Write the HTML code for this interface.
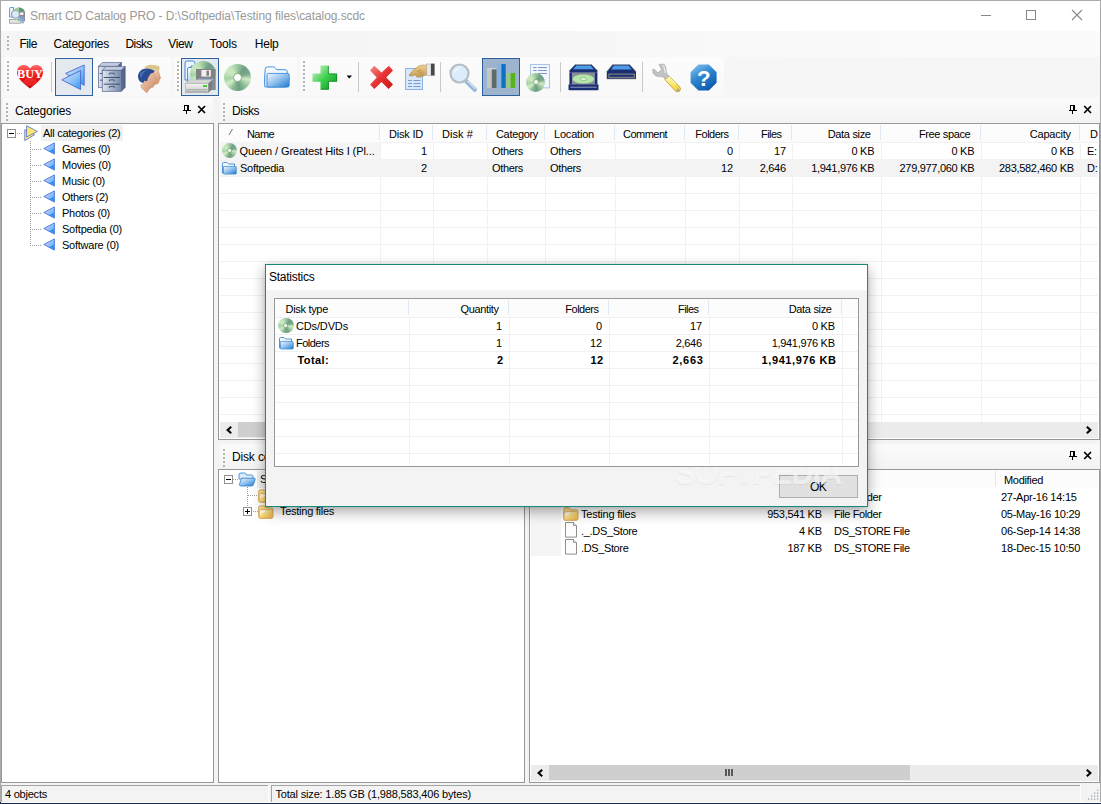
<!DOCTYPE html>
<html><head><meta charset="utf-8"><title>Smart CD Catalog PRO</title>
<style>
*{box-sizing:border-box;margin:0;padding:0}
html,body{width:1101px;height:804px;overflow:hidden;background:#f0f0f0}
body{position:relative;font-family:"Liberation Sans",sans-serif;font-size:12px;color:#000}
.a{position:absolute}
.t{position:absolute;white-space:nowrap}
.box{background:#fff;border:1px solid #979797}
.grip{background-image:repeating-linear-gradient(to bottom,#b4b4b4 0,#b4b4b4 2px,transparent 2px,transparent 4px)}
.sep{width:1px;background:#c8c8c8}
.btnsel{border:1px solid #2c62a0;background:#e4e9ef}
</style></head><body>
<svg width="0" height="0" style="position:absolute"><defs>

<linearGradient id="gHeart" x1="0" y1="0" x2="0" y2="1"><stop offset="0" stop-color="#ff6a6a"/><stop offset=".45" stop-color="#f01818"/><stop offset="1" stop-color="#c80000"/></linearGradient>
<linearGradient id="gTri" x1="0" y1="0" x2="1" y2="1"><stop offset="0" stop-color="#d6e8ff"/><stop offset=".55" stop-color="#8fc0f8"/><stop offset="1" stop-color="#2f98f4"/></linearGradient>
<linearGradient id="gCab" x1="0" y1="0" x2="1" y2="0"><stop offset="0" stop-color="#e4e9f2"/><stop offset=".5" stop-color="#a9b5cc"/><stop offset="1" stop-color="#7686a8"/></linearGradient>
<linearGradient id="gFold" x1="0" y1="0" x2="1" y2="1"><stop offset="0" stop-color="#f4f9ff"/><stop offset=".5" stop-color="#8fc0ee"/><stop offset="1" stop-color="#2078cc"/></linearGradient>
<linearGradient id="gFoldB" x1="0" y1="0" x2="0" y2="1"><stop offset="0" stop-color="#ffffff"/><stop offset="1" stop-color="#b8d6f4"/></linearGradient>
<linearGradient id="gFoldY" x1="0" y1="0" x2="1" y2="1"><stop offset="0" stop-color="#fff6c4"/><stop offset=".5" stop-color="#f9dc7c"/><stop offset="1" stop-color="#e6a53e"/></linearGradient>
<linearGradient id="gPlus" x1="0" y1="0" x2="1" y2="1"><stop offset="0" stop-color="#d8f8d4"/><stop offset=".5" stop-color="#3fcf4f"/><stop offset="1" stop-color="#089a1c"/></linearGradient>
<linearGradient id="gX" x1="0" y1="0" x2="1" y2="1"><stop offset="0" stop-color="#f58a8a"/><stop offset=".5" stop-color="#e63232"/><stop offset="1" stop-color="#c81414"/></linearGradient>
<linearGradient id="gHelp" x1="0" y1="0" x2=".6" y2="1"><stop offset="0" stop-color="#8cc6f2"/><stop offset=".5" stop-color="#2f88d2"/><stop offset="1" stop-color="#0e5cae"/></linearGradient>
<linearGradient id="gDrv" x1="0" y1="0" x2="0" y2="1"><stop offset="0" stop-color="#f4f4f4"/><stop offset="1" stop-color="#c4c6c4"/></linearGradient>
<linearGradient id="gSkin" x1="0" y1="0" x2="1" y2="1"><stop offset="0" stop-color="#f6dcc8"/><stop offset="1" stop-color="#c88058"/></linearGradient>
<linearGradient id="gHand" x1="0" y1="0" x2="0" y2="1"><stop offset="0" stop-color="#f0d08c"/><stop offset="1" stop-color="#c89a50"/></linearGradient>
<linearGradient id="gYel" x1="0" y1="0" x2="1" y2="1"><stop offset="0" stop-color="#fff59a"/><stop offset="1" stop-color="#f4d84a"/></linearGradient>

</defs></svg>
<div class="a " style="left:0px;top:0px;width:1101px;height:804px;background:#f3f3f3;"></div>
<div class="a " style="left:1px;top:1px;width:1099px;height:30px;background:#fff;"></div>
<div class="a " style="left:1px;top:31px;width:1099px;height:67px;background:linear-gradient(to right,#f5f5f5 0,#f6f6f6 50%,#f9f9f9 67%,#fbfbfb 100%);"></div>
<div class="a " style="left:1px;top:57px;width:1099px;height:41px;background:#f6f6f6;"></div>
<svg class="a" style="left:9px;top:6.6px" width="17" height="17" viewBox="0 0 17 17"><path d="M.6 1.2q0-.7.7-.7h3.2v9.5h-3.9z" fill="#eaf3fc" stroke="#4a90dc" stroke-width=".9"/><path d="M3.6 6.4A6.2 6.2 0 0 1 16 6.4z" fill="#9ccf9a"/><path d="M10 .4A6.2 6.2 0 0 1 16 6.4H10z" fill="#5f9a78"/><rect x="10" y="4.6" width="6" height="9.8" fill="#8a8a8a"/><rect x="11.2" y="5.4" width="3.2" height="2.6" fill="#f4f4f4"/><rect x="11" y="9.4" width="4.4" height="4.6" fill="#8a9ccc"/><rect x=".6" y="12.4" width="11.4" height="3.8" fill="#e4e6e4" stroke="#8e908e" stroke-width=".7"/><rect x="9" y="13.2" width="1.6" height="1" fill="#38c820"/><path d="M9 10L14 15.4" stroke="#8ab4dc" stroke-width="2.2" stroke-linecap="round"/><circle cx="6.4" cy="7.2" r="3.9" fill="#d8ecfa" stroke="#a4acb4" stroke-width="1.3"/></svg>
<div class="t" style="top:8.34px;font-size:12px;line-height:16px;letter-spacing:-0.072px;color:#999;left:30px;">Smart CD Catalog PRO - D:\Softpedia\Testing files\catalog.scdc</div>
<svg class="a" style="left:970px;top:5px" width="120" height="22" viewBox="0 0 120 22"><path d="M11 10.5H21" stroke="#888" stroke-width="1" fill="none"/><rect x="56.5" y="5.5" width="9" height="9" fill="none" stroke="#888"/><path d="M102 5L112 15M112 5L102 15" stroke="#888" stroke-width="1.1" fill="none"/></svg>
<div class="a grip" style="left:7px;top:36px;width:2px;height:16px;"></div>
<div class="t" style="top:35.84px;font-size:12px;line-height:16px;letter-spacing:-0.459px;color:#000;left:19.4px;">File</div>
<div class="t" style="top:35.84px;font-size:12px;line-height:16px;letter-spacing:-0.253px;color:#000;left:53.5px;">Categories</div>
<div class="t" style="top:35.84px;font-size:12px;line-height:16px;letter-spacing:-0.546px;color:#000;left:125.4px;">Disks</div>
<div class="t" style="top:35.84px;font-size:12px;line-height:16px;letter-spacing:-0.348px;color:#000;left:168.2px;">View</div>
<div class="t" style="top:35.84px;font-size:12px;line-height:16px;letter-spacing:-0.143px;color:#000;left:209.6px;">Tools</div>
<div class="t" style="top:35.84px;font-size:12px;line-height:16px;letter-spacing:-0.195px;color:#000;left:254.7px;">Help</div>
<div class="a " style="left:4px;top:57px;width:167px;height:40px;background:linear-gradient(#fcfcfc,#f8f8f8);border-radius:4px 4px 0 0;"></div>
<div class="a grip" style="left:7px;top:61px;width:2px;height:32px;"></div>
<div class="a " style="left:174px;top:57px;width:123px;height:40px;background:linear-gradient(#fcfcfc,#f8f8f8);border-radius:4px 4px 0 0;"></div>
<div class="a grip" style="left:177px;top:61px;width:2px;height:32px;"></div>
<div class="a " style="left:300px;top:57px;width:424px;height:40px;background:linear-gradient(#fcfcfc,#f8f8f8);border-radius:4px 4px 0 0;"></div>
<div class="a grip" style="left:303px;top:61px;width:2px;height:32px;"></div>
<div class="a sep" style="left:51px;top:62px;width:1px;height:30px;"></div>
<div class="a sep" style="left:358px;top:62px;width:1px;height:30px;"></div>
<div class="a sep" style="left:440px;top:62px;width:1px;height:30px;"></div>
<div class="a sep" style="left:560px;top:62px;width:1px;height:30px;"></div>
<div class="a sep" style="left:642px;top:62px;width:1px;height:30px;"></div>
<div class="a btnsel" style="left:55px;top:58px;width:38px;height:38px;"></div>
<div class="a btnsel" style="left:181px;top:58px;width:38px;height:38px;"></div>
<div class="a " style="left:482px;top:58px;width:38px;height:38px;border:1px solid #2b5f9e;background:#9db3ce;"></div>
<svg class="a" style="left:16px;top:64px" width="28" height="26" viewBox="0 0 28 26"><path d="M14 24.5C5 17.5 1 13.5 1 8C1 3.5 4.3 1 7.8 1C10.6 1 12.8 2.5 14 4.6C15.2 2.5 17.4 1 20.2 1C23.7 1 27 3.5 27 8C27 13.5 23 17.5 14 24.5z" fill="url(#gHeart)"/><ellipse cx="14" cy="18" rx="7" ry="4" fill="#ff5a5a" opacity=".35"/><text x="14" y="14.4" text-anchor="middle" font-family="Liberation Serif,serif" font-weight="bold" font-size="11.5" fill="#fff" textLength="26" lengthAdjust="spacingAndGlyphs">BUY</text></svg>
<svg class="a" style="left:61px;top:64px" width="26" height="27" viewBox="0 0 26 27"><path d="M4.6 9.4L23.2 1v20.4z" fill="url(#gTri)" stroke="#4a6cc8" stroke-width=".9" stroke-linejoin="round"/><path d="M.8 15.8L19.6 6.4V25.6z" fill="url(#gTri)" stroke="#4a6cc8" stroke-width=".9" stroke-linejoin="round"/></svg>
<svg class="a" style="left:97.6px;top:61.6px" width="28.6" height="30.6" viewBox="0 0 30 32"><g transform="translate(0.5,0.5)"><path d="M0 4L4 0H24L20 4z" fill="#c4cde0" stroke="#5a6a90" stroke-width=".7"/><path d="M20 4L24 0V22L20 26z" fill="#55658e" stroke="#4a5a82" stroke-width=".7"/><rect x="0" y="4" width="20" height="22" fill="url(#gCab)" stroke="#5a6a90" stroke-width=".8"/><path d="M1.5 11.5H18.5M1.5 18.5H18.5" stroke="#3a4a78" stroke-width="1"/><path d="M7.5 8.5V7h5v1.5M7.5 15.5V14h5v1.5M7.5 22.5V21h5v1.5" fill="none" stroke="#3a4a78" stroke-width=".9"/></g><g transform="translate(4.5,4.7)"><path d="M0 4L4 0H24L20 4z" fill="#c4cde0" stroke="#5a6a90" stroke-width=".7"/><path d="M20 4L24 0V22L20 26z" fill="#55658e" stroke="#4a5a82" stroke-width=".7"/><rect x="0" y="4" width="20" height="22" fill="url(#gCab)" stroke="#5a6a90" stroke-width=".8"/><path d="M1.5 11.5H18.5M1.5 18.5H18.5" stroke="#3a4a78" stroke-width="1"/><path d="M7.5 8.5V7h5v1.5M7.5 15.5V14h5v1.5M7.5 22.5V21h5v1.5" fill="none" stroke="#3a4a78" stroke-width=".9"/></g></svg>
<svg class="a" style="left:137px;top:64px" width="26" height="30" viewBox="0 0 26 30"><path d="M7.2 3.9Q8.4 2 10.1 1.4Q13.4 .6 16.8 .9Q20 1.2 21.8 2.2Q22.9 3.2 22.7 4.3L21.8 7.4L17.2 5.7L13.5 4.9z" fill="#d9c688"/><path d="M16.6 5.4L21.8 7Q22.6 8.6 22.7 10.5Q23.6 12.6 24 13.9Q23.6 14.8 22.7 15.6Q23 16.6 22.3 17.2Q22.2 18.8 21 19.7Q19.8 20.6 18.5 20.6L16 16z" fill="url(#gSkin)"/><path d="M13.5 9.7L17.2 8.9Q18 10.6 18.5 12.2Q19.4 15 19.5 16.8Q19 17.8 18.3 18.3Q18.9 19.6 18.1 20.2Q18 21.4 16.8 21.8Q16.6 23.2 15.4 23.6Q14 24 13 24.6L9.7 28.9L5.1 24.7Q3.8 23 3.5 21.4L6.4 18.9L7.6 16.8L10.1 17.2L11 13.9z" fill="url(#gSkin)" stroke="#c08860" stroke-width=".3"/><path d="M.95 13.05Q.9 10.6 1.8 8.9Q3 6.6 5.1 5.5Q8.4 4.2 11.8 4.7Q15.4 5.2 17.7 6.8L16.8 8.5L13.5 9.7L11 13.9L10.1 17.2L7.6 16.8L6.4 18.9L3.5 18.1Q1.4 16.4 .95 13.05z" fill="#2a4a92"/><path d="M3 9.4Q5.6 6.2 10.6 6Q7.6 7.4 6 10Q4.8 12 4.4 14.4Q2.6 12 3 9.4z" fill="#5078bc" opacity=".75"/><path d="M6.4 18.9Q7.6 20.4 8.4 19.6Q9 18.4 7.6 16.8z" fill="#e2ae8c"/></svg>
<svg class="a" style="left:184px;top:60px" width="34" height="34" viewBox="0 0 34 34"><path d="M1 3q0-2 2-2h6.5l1.5 2v3h-4v14h-6z" fill="#eef5fd" stroke="#3a8ad8" stroke-width="1"/><path d="M3.5 9q0-1.5 1.5-1.5h5v14h-6.5z" fill="url(#gFoldB)" stroke="#3a8ad8" stroke-width=".9"/></svg>
<div class="a" style="left:189.5px;top:60.5px;width:26px;height:26px;border-radius:50%;background:conic-gradient(from 0deg,#9cc8a0 0deg,#6f9f86 35deg,#7aa88c 70deg,#cfeac4 100deg,#8fbf96 140deg,#6d9c84 170deg,#86b690 200deg,#d2edc8 235deg,#a6d2a4 265deg,#cdeac2 300deg,#c2e4ba 330deg,#9cc8a0 360deg);"></div>
<div class="a" style="left:199.5px;top:70.5px;width:6px;height:6px;border-radius:50%;background:#fff;border:0.6px solid #86ad7c;"></div>
<svg class="a" style="left:184px;top:60px" width="34" height="34" viewBox="0 0 34 34"><rect x="12" y="9" width="19.6" height="21" fill="#828282"/><rect x="17.4" y="10" width="9.4" height="6.6" fill="#f2f2f2"/><rect x="22.4" y="10.6" width="2.6" height="5.2" fill="#828282"/><rect x="14" y="18.4" width="15.6" height="11" fill="#8a9ccc"/><path d="M1.4 23.4L6 19.8H28.6L24.2 23.4z" fill="#d4d6d4" stroke="#b0b2b0" stroke-width=".4"/><path d="M24.2 23.4L28.6 19.8V29L24.2 32.8z" fill="#7a7c7a"/><rect x="1.4" y="23.4" width="22.8" height="9.4" fill="url(#gDrv)" stroke="#9a9c9a" stroke-width=".5"/><path d="M2.4 29.6H23.2M2.4 31.4H23.2" stroke="#9a9c9a" stroke-width=".7"/><rect x="19" y="25.2" width="4" height="1.8" fill="#38c820"/></svg>
<div class="a" style="left:224.0px;top:64.0px;width:26.8px;height:26.8px;border-radius:50%;background:conic-gradient(from 0deg,#9cc8a0 0deg,#6f9f86 35deg,#7aa88c 70deg,#cfeac4 100deg,#8fbf96 140deg,#6d9c84 170deg,#86b690 200deg,#d2edc8 235deg,#a6d2a4 265deg,#cdeac2 300deg,#c2e4ba 330deg,#9cc8a0 360deg);"></div>
<div class="a" style="left:233.20000000000002px;top:73.2px;width:8.4px;height:8.4px;border-radius:50%;background:#fff;border:0.8px solid #86ad7c;"></div>
<svg class="a" style="left:263.6px;top:65.8px" width="26.6" height="22.4" viewBox="0 0 28 24"><path d="M1 3.5Q1 1 3.5 1h6.2q1.3 0 2.1 1l1.6 2h9.2q2 0 2 2v14.6q0 2-2 2h-20.6q-2 0-2-2z" fill="url(#gFoldB)" stroke="#3a8ad8" stroke-width="1"/><path d="M3 9.6q0-1.6 1.6-1.6h20.6q1.6 0 1.6 1.6v11.2q0 1.8-1.8 1.8h-20.2q-1.8 0-1.8-1.8z" fill="url(#gFold)" stroke="#3a8ad8" stroke-width=".9"/></svg>
<svg class="a" style="left:312px;top:65px" width="26" height="25" viewBox="0 0 26 25"><path d="M8.5 .5h8.4v8h8.2v8.2h-8.2v8h-8.4v-8h-8v-8.2h8z" fill="url(#gPlus)"/><path d="M16.4 1v8h8.2M16.4 16.4v7.8h-7.6M24.6 9.4v6.8h-7.8" fill="none" stroke="#067a14" stroke-width="1" opacity=".55"/></svg>
<svg class="a" style="left:346px;top:75px" width="7" height="4" viewBox="0 0 7 4"><path d="M.6 .6H6L3.3 3.6z" fill="#000"/></svg>
<svg class="a" style="left:369px;top:65px" width="25" height="25" viewBox="0 0 25 25"><path d="M5.2 .8L12.5 7.6L19.8 .8L24 5.4L17.2 12.4L24 19.4L19.6 24L12.5 17L5.4 24L1 19.4L7.8 12.4L1 5.4z" fill="url(#gX)"/></svg>
<svg class="a" style="left:404px;top:62px" width="32" height="30" viewBox="0 0 32 30"><rect x="1.5" y="6.5" width="17" height="21" fill="#d6e8fa" stroke="#8ab4e8" stroke-width="1"/><path d="M4 18.5h4M9.5 18.5h7M4 21.5h4M9.5 21.5h7M4 24.5h4M9.5 24.5h7" stroke="#7a9ad8" stroke-width="1.1"/><path d="M5.5 12.5C8 9 12 5.5 15 4C18 2.5 21 3 23 3.4V12.4C20 13.6 17 15.4 14 15.2C12 15 11.4 13.6 12 12.6C9.6 13.6 7 14.4 5.8 14C5 13.6 5 13 5.5 12.5z" fill="url(#gHand)" stroke="#a07a3a" stroke-width=".5"/><path d="M13 10L17 7.6M14.4 11.8L18.4 9.4M16 13.4L19.6 11" stroke="#a07a3a" stroke-width=".6"/><rect x="22.6" y="2" width="4.4" height="11.4" fill="#e8e8e8" stroke="#a0a0a0" stroke-width=".5"/><rect x="27" y="1.6" width="3.6" height="12" fill="#484848"/></svg>
<svg class="a" style="left:448px;top:62px" width="32" height="32" viewBox="0 0 32 32"><path d="M18.5 19.5L26.8 27.6" stroke="#9ab8d6" stroke-width="4.4" stroke-linecap="round"/><path d="M19.5 19L27.4 26.8" stroke="#d6e6f4" stroke-width="1.2"/><circle cx="11.5" cy="11.5" r="9" fill="#dcecfa" stroke="#b4bcc4" stroke-width="2.2"/><path d="M6 11C6.5 7 10 5 13 5.6C10.6 7 8 8.6 6 11z" fill="#fff" opacity=".8"/></svg>
<svg class="a" style="left:486.8px;top:64px" width="30" height="25" viewBox="0 0 30 25"><rect x="0" y="4.6" width="4.8" height="19.4" fill="#c2c8c8"/><rect x="4.8" y="5.4" width="4.7" height="18.6" fill="#5f6b6b"/><rect x="0" y="4.2" width="9.5" height="1" fill="#d4d8d8"/><rect x="10.2" y="0" width="4.2" height="24" fill="#86b4e2"/><rect x="14.4" y="0" width="4.3" height="24" fill="#1270c0"/><rect x="19.2" y="9" width="4.4" height="15" fill="#9acb7a"/><rect x="23.6" y="9" width="4.6" height="15" fill="#58b41e"/></svg>
<svg class="a" style="left:529px;top:64px" width="22" height="26" viewBox="0 0 22 26"><rect x="1.5" y=".5" width="19" height="23.4" fill="#f2f6fd" stroke="#a8c4ea" stroke-width="1"/><path d="M4 3.5h3.6M9 3.5h9M4 6.5h3.6M9 6.5h9M9 9.5h9" stroke="#8494c4" stroke-width="1.1"/></svg>
<div class="a" style="left:526.0px;top:72.7px;width:19.2px;height:19.2px;border-radius:50%;background:conic-gradient(from 0deg,#9cc8a0 0deg,#6f9f86 35deg,#7aa88c 70deg,#cfeac4 100deg,#8fbf96 140deg,#6d9c84 170deg,#86b690 200deg,#d2edc8 235deg,#a6d2a4 265deg,#cdeac2 300deg,#c2e4ba 330deg,#9cc8a0 360deg);"></div>
<div class="a" style="left:532.5px;top:79.2px;width:6.2px;height:6.2px;border-radius:50%;background:#fff;border:0.6px solid #86ad7c;"></div>
<svg class="a" style="left:568px;top:63.5px" width="31" height="27" viewBox="0 0 31 27"><path d="M7.2 .5H23.6L29.4 6.6V8.8H1.4V6.6z" fill="#1a2f72"/><path d="M8.4 1.6H22.6L26 5.2H5z" fill="#4e9ae4"/><path d="M7.2 .5H23.6L29.4 6.6" fill="none" stroke="#a8a090" stroke-width=".6"/><rect x="1.4" y="8.8" width="3" height="11.4" fill="#1a2f72"/><rect x="26.4" y="8.8" width="3" height="11.4" fill="#1a2f72"/><rect x="4.4" y="8.8" width="22" height="11.4" fill="#8a8e92"/><ellipse cx="15.4" cy="15" rx="10.8" ry="4.6" fill="#b4e6a8"/><ellipse cx="15.4" cy="15" rx="3.4" ry="1.6" fill="#d8f4d0" stroke="#7aa88a" stroke-width=".6"/><rect x=".5" y="20.2" width="30" height="6" rx=".8" fill="#1a2f72"/><path d="M2.4 23.2H28.6" stroke="#c8ccd8" stroke-width=".7"/></svg>
<svg class="a" style="left:606px;top:63.5px" width="31" height="16" viewBox="0 0 31 16"><path d="M6.6 .5H23.6L30 7.6V15H.8V7.6z" fill="#1a2f72"/><path d="M7.8 1.6H22.6L25.6 5.4H5z" fill="#4e9ae4"/><path d="M6.6 .5H23.6L30 7.6M.8 7.6L6.6 .5" fill="none" stroke="#a8a090" stroke-width=".6"/><rect x="2.9" y="10.1" width="25.4" height="3.2" fill="none" stroke="#a09888" stroke-width=".9"/><path d="M.8 15H30" stroke="#a8a090" stroke-width=".6"/></svg>
<svg class="a" style="left:651px;top:63px" width="30" height="30" viewBox="0 0 30 30"><path d="M16.6 15.6L26.6 26" stroke="#c8a020" stroke-width="6.2" stroke-linecap="round"/><path d="M16.6 15.6L26.4 25.8" stroke="url(#gYel)" stroke-width="5" stroke-linecap="round"/><path d="M17.4 13.8L24.8 21.4" stroke="#fffad0" stroke-width="1.2" opacity=".8"/><path d="M27.2 25L28.6 28.4L25 27.4z" fill="#a0a4a8"/><path d="M8 1.4L12.6 1C14.4 2.4 15 4.6 15 6.6C15.2 9 15.6 11 17.8 13L15 16.2C13 14 11 13.6 8.6 13.6C6 13.6 3.4 12.6 2 10.2L1.6 6.6L3.4 6.2L7 10L10.6 6.4z" fill="#c0c2c4" stroke="#a0a4a6" stroke-width=".6"/><path d="M12 2C13.6 4 13.6 7 14.4 10" stroke="#eceeee" stroke-width="1.2" fill="none"/></svg>
<svg class="a" style="left:690px;top:64px" width="27.2" height="27.2" viewBox="0 0 28 28"><path d="M8.6 .6H19.4L27.4 8.6V19.4L19.4 27.4H8.6L.6 19.4V8.6z" fill="url(#gHelp)"/><text x="14.2" y="22.6" text-anchor="middle" font-family="Liberation Sans,sans-serif" font-weight="bold" font-size="23" fill="#fff">?</text></svg>
<div class="a " style="left:3px;top:98px;width:210px;height:24px;background:linear-gradient(#fbfbfb,#f8f8f8 45%,#f3f3f3);border-radius:3px 0 0 0;"></div>
<div class="a grip" style="left:6px;top:103px;width:2px;height:18px;"></div>
<div class="t" style="top:103.14px;font-size:12px;line-height:16px;letter-spacing:-0.203px;color:#000;left:15px;">Categories</div>
<svg class="a" style="left:183px;top:105px" width="24" height="10" viewBox="0 0 24 10"><path d="M1 0h5v1h-5zM1 0h1v6h-1zM4 0h2v6h-2zM0 5h8v1h-8zM3 6h1v3h-1z" fill="#000"/><path d="M15.2 1L22 8M22 1L15.2 8" stroke="#000" stroke-width="1.7" fill="none"/></svg>
<div class="a " style="left:220px;top:98px;width:879px;height:24px;background:linear-gradient(#fbfbfb,#f8f8f8 45%,#f3f3f3);border-radius:3px 0 0 0;"></div>
<div class="a grip" style="left:223px;top:103px;width:2px;height:18px;"></div>
<div class="t" style="top:103.14px;font-size:12px;line-height:16px;letter-spacing:-0.466px;color:#000;left:232px;">Disks</div>
<svg class="a" style="left:1069px;top:105px" width="24" height="10" viewBox="0 0 24 10"><path d="M1 0h5v1h-5zM1 0h1v6h-1zM4 0h2v6h-2zM0 5h8v1h-8zM3 6h1v3h-1z" fill="#000"/><path d="M15.2 1L22 8M22 1L15.2 8" stroke="#000" stroke-width="1.7" fill="none"/></svg>
<div class="a " style="left:220px;top:444px;width:879px;height:24px;background:linear-gradient(#fbfbfb,#f8f8f8 45%,#f3f3f3);border-radius:3px 0 0 0;"></div>
<div class="a grip" style="left:223px;top:449px;width:2px;height:18px;"></div>
<div class="t" style="top:449.14px;font-size:12px;line-height:16px;letter-spacing:-0.156px;color:#000;left:232px;">Disk contents</div>
<svg class="a" style="left:1069px;top:451px" width="24" height="10" viewBox="0 0 24 10"><path d="M1 0h5v1h-5zM1 0h1v6h-1zM4 0h2v6h-2zM0 5h8v1h-8zM3 6h1v3h-1z" fill="#000"/><path d="M15.2 1L22 8M22 1L15.2 8" stroke="#000" stroke-width="1.7" fill="none"/></svg>
<div class="a box" style="left:1px;top:123px;width:213px;height:660px;"></div>
<div class="a " style="left:17px;top:133px;width:6px;height:1px;background-image:repeating-linear-gradient(to right,#a0a0a0 0,#a0a0a0 1px,transparent 1px,transparent 2px);"></div>
<div class="a " style="left:30px;top:141px;width:1px;height:105px;background-image:repeating-linear-gradient(to bottom,#a0a0a0 0,#a0a0a0 1px,transparent 1px,transparent 2px);"></div>
<svg class="a" style="left:7px;top:129px" width="9" height="9" viewBox="0 0 9 9"><rect x=".5" y=".5" width="8" height="8" fill="#fff" stroke="#919191"/><path d="M2 4.5h5" stroke="#000"/></svg>
<svg class="a" style="left:24px;top:125px" width="15" height="17" viewBox="0 0 15 17"><path d="M.8 4.6L10.5 9.8L.8 15.6z" fill="#ffee5a" stroke="#5a78e0" stroke-width=".9" stroke-linejoin="round"/><path d="M2.6 .8L13.4 6.4L2.6 12z" fill="#ffee5a" stroke="#5a78e0" stroke-width=".9" stroke-linejoin="round"/><path d="M4.5 4L10.5 6.6L5 9.5z" fill="#ffd88a" opacity=".8"/></svg>
<div class="a " style="left:41px;top:125px;width:82px;height:16px;background:#f1f1f1;"></div>
<div class="t" style="top:126.19px;font-size:11px;line-height:14px;letter-spacing:-0.28px;color:#000;left:43px;">All categories (2)</div>
<div class="a " style="left:30px;top:149px;width:12px;height:1px;background-image:repeating-linear-gradient(to right,#a0a0a0 0,#a0a0a0 1px,transparent 1px,transparent 2px);"></div>
<svg class="a" style="left:43px;top:142px" width="13" height="13" viewBox="0 0 13 13"><path d="M.8 6.5L11.4 .9V12.1z" fill="url(#gTri)" stroke="#4a72d8" stroke-width=".9" stroke-linejoin="round"/><path d="M11 7V11.5L6 9z" fill="#1e90f4" opacity=".85"/></svg>
<div class="t" style="top:142.19px;font-size:11px;line-height:14px;letter-spacing:-0.439px;color:#000;left:62px;">Games (0)</div>
<div class="a " style="left:30px;top:165px;width:12px;height:1px;background-image:repeating-linear-gradient(to right,#a0a0a0 0,#a0a0a0 1px,transparent 1px,transparent 2px);"></div>
<svg class="a" style="left:43px;top:158px" width="13" height="13" viewBox="0 0 13 13"><path d="M.8 6.5L11.4 .9V12.1z" fill="url(#gTri)" stroke="#4a72d8" stroke-width=".9" stroke-linejoin="round"/><path d="M11 7V11.5L6 9z" fill="#1e90f4" opacity=".85"/></svg>
<div class="t" style="top:158.19px;font-size:11px;line-height:14px;letter-spacing:-0.234px;color:#000;left:62px;">Movies (0)</div>
<div class="a " style="left:30px;top:181px;width:12px;height:1px;background-image:repeating-linear-gradient(to right,#a0a0a0 0,#a0a0a0 1px,transparent 1px,transparent 2px);"></div>
<svg class="a" style="left:43px;top:174px" width="13" height="13" viewBox="0 0 13 13"><path d="M.8 6.5L11.4 .9V12.1z" fill="url(#gTri)" stroke="#4a72d8" stroke-width=".9" stroke-linejoin="round"/><path d="M11 7V11.5L6 9z" fill="#1e90f4" opacity=".85"/></svg>
<div class="t" style="top:174.19px;font-size:11px;line-height:14px;letter-spacing:-0.247px;color:#000;left:62px;">Music (0)</div>
<div class="a " style="left:30px;top:197px;width:12px;height:1px;background-image:repeating-linear-gradient(to right,#a0a0a0 0,#a0a0a0 1px,transparent 1px,transparent 2px);"></div>
<svg class="a" style="left:43px;top:190px" width="13" height="13" viewBox="0 0 13 13"><path d="M.8 6.5L11.4 .9V12.1z" fill="url(#gTri)" stroke="#4a72d8" stroke-width=".9" stroke-linejoin="round"/><path d="M11 7V11.5L6 9z" fill="#1e90f4" opacity=".85"/></svg>
<div class="t" style="top:190.19px;font-size:11px;line-height:14px;letter-spacing:-0.351px;color:#000;left:62px;">Others (2)</div>
<div class="a " style="left:30px;top:213px;width:12px;height:1px;background-image:repeating-linear-gradient(to right,#a0a0a0 0,#a0a0a0 1px,transparent 1px,transparent 2px);"></div>
<svg class="a" style="left:43px;top:206px" width="13" height="13" viewBox="0 0 13 13"><path d="M.8 6.5L11.4 .9V12.1z" fill="url(#gTri)" stroke="#4a72d8" stroke-width=".9" stroke-linejoin="round"/><path d="M11 7V11.5L6 9z" fill="#1e90f4" opacity=".85"/></svg>
<div class="t" style="top:206.19px;font-size:11px;line-height:14px;letter-spacing:-0.275px;color:#000;left:62px;">Photos (0)</div>
<div class="a " style="left:30px;top:229px;width:12px;height:1px;background-image:repeating-linear-gradient(to right,#a0a0a0 0,#a0a0a0 1px,transparent 1px,transparent 2px);"></div>
<svg class="a" style="left:43px;top:222px" width="13" height="13" viewBox="0 0 13 13"><path d="M.8 6.5L11.4 .9V12.1z" fill="url(#gTri)" stroke="#4a72d8" stroke-width=".9" stroke-linejoin="round"/><path d="M11 7V11.5L6 9z" fill="#1e90f4" opacity=".85"/></svg>
<div class="t" style="top:222.19px;font-size:11px;line-height:14px;letter-spacing:-0.229px;color:#000;left:62px;">Softpedia (0)</div>
<div class="a " style="left:30px;top:245px;width:12px;height:1px;background-image:repeating-linear-gradient(to right,#a0a0a0 0,#a0a0a0 1px,transparent 1px,transparent 2px);"></div>
<svg class="a" style="left:43px;top:238px" width="13" height="13" viewBox="0 0 13 13"><path d="M.8 6.5L11.4 .9V12.1z" fill="url(#gTri)" stroke="#4a72d8" stroke-width=".9" stroke-linejoin="round"/><path d="M11 7V11.5L6 9z" fill="#1e90f4" opacity=".85"/></svg>
<div class="t" style="top:238.19px;font-size:11px;line-height:14px;letter-spacing:-0.242px;color:#000;left:62px;">Software (0)</div>
<div class="a box" style="left:218px;top:123px;width:882px;height:317px;"></div>
<div class="a " style="left:220px;top:124px;width:878px;height:18px;background:#fcfcfc;"></div>
<div class="a " style="left:220px;top:142px;width:878px;height:1px;background:#f1f1f1;"></div>
<div class="a " style="left:220px;top:159px;width:878px;height:1px;background:#f1f1f1;"></div>
<div class="a " style="left:220px;top:176px;width:878px;height:1px;background:#f1f1f1;"></div>
<div class="a " style="left:220px;top:193px;width:878px;height:1px;background:#f1f1f1;"></div>
<div class="a " style="left:220px;top:210px;width:878px;height:1px;background:#f1f1f1;"></div>
<div class="a " style="left:220px;top:227px;width:878px;height:1px;background:#f1f1f1;"></div>
<div class="a " style="left:220px;top:244px;width:878px;height:1px;background:#f1f1f1;"></div>
<div class="a " style="left:220px;top:261px;width:878px;height:1px;background:#f1f1f1;"></div>
<div class="a " style="left:220px;top:278px;width:878px;height:1px;background:#f1f1f1;"></div>
<div class="a " style="left:220px;top:295px;width:878px;height:1px;background:#f1f1f1;"></div>
<div class="a " style="left:220px;top:312px;width:878px;height:1px;background:#f1f1f1;"></div>
<div class="a " style="left:220px;top:329px;width:878px;height:1px;background:#f1f1f1;"></div>
<div class="a " style="left:220px;top:346px;width:878px;height:1px;background:#f1f1f1;"></div>
<div class="a " style="left:220px;top:363px;width:878px;height:1px;background:#f1f1f1;"></div>
<div class="a " style="left:220px;top:380px;width:878px;height:1px;background:#f1f1f1;"></div>
<div class="a " style="left:220px;top:397px;width:878px;height:1px;background:#f1f1f1;"></div>
<div class="a " style="left:220px;top:414px;width:878px;height:1px;background:#f1f1f1;"></div>
<div class="a " style="left:380px;top:142px;width:1px;height:280px;background:#f1f1f1;"></div>
<div class="a " style="left:379px;top:125px;width:1px;height:15px;background:#dfe8f5;"></div>
<div class="a " style="left:433px;top:142px;width:1px;height:280px;background:#f1f1f1;"></div>
<div class="a " style="left:432px;top:125px;width:1px;height:15px;background:#dfe8f5;"></div>
<div class="a " style="left:487px;top:142px;width:1px;height:280px;background:#f1f1f1;"></div>
<div class="a " style="left:486px;top:125px;width:1px;height:15px;background:#dfe8f5;"></div>
<div class="a " style="left:545px;top:142px;width:1px;height:280px;background:#f1f1f1;"></div>
<div class="a " style="left:544px;top:125px;width:1px;height:15px;background:#dfe8f5;"></div>
<div class="a " style="left:615px;top:142px;width:1px;height:280px;background:#f1f1f1;"></div>
<div class="a " style="left:614px;top:125px;width:1px;height:15px;background:#dfe8f5;"></div>
<div class="a " style="left:685px;top:142px;width:1px;height:280px;background:#f1f1f1;"></div>
<div class="a " style="left:684px;top:125px;width:1px;height:15px;background:#dfe8f5;"></div>
<div class="a " style="left:739px;top:142px;width:1px;height:280px;background:#f1f1f1;"></div>
<div class="a " style="left:738px;top:125px;width:1px;height:15px;background:#dfe8f5;"></div>
<div class="a " style="left:792px;top:142px;width:1px;height:280px;background:#f1f1f1;"></div>
<div class="a " style="left:791px;top:125px;width:1px;height:15px;background:#dfe8f5;"></div>
<div class="a " style="left:881px;top:142px;width:1px;height:280px;background:#f1f1f1;"></div>
<div class="a " style="left:880px;top:125px;width:1px;height:15px;background:#dfe8f5;"></div>
<div class="a " style="left:981px;top:142px;width:1px;height:280px;background:#f1f1f1;"></div>
<div class="a " style="left:980px;top:125px;width:1px;height:15px;background:#dfe8f5;"></div>
<div class="a " style="left:1080px;top:142px;width:1px;height:280px;background:#f1f1f1;"></div>
<div class="a " style="left:1079px;top:125px;width:1px;height:15px;background:#dfe8f5;"></div>
<div class="a " style="left:220px;top:142px;width:160px;height:17px;background:#f5f5f5;"></div>
<div class="a " style="left:220px;top:159px;width:878px;height:18px;background:#f3f3f3;"></div>
<svg class="a" style="left:228px;top:128px" width="6" height="8" viewBox="0 0 6 8"><path d="M1 7L4.5 1" stroke="#777" stroke-width="1" fill="none"/></svg>
<div class="t" style="top:126.69px;font-size:11px;line-height:14px;letter-spacing:-0.586px;color:#000;left:247px;">Name</div>
<div class="t" style="top:126.69px;font-size:11px;line-height:14px;letter-spacing:-0.206px;color:#000;left:389px;">Disk ID</div>
<div class="t" style="top:126.69px;font-size:11px;line-height:14px;letter-spacing:0.073px;color:#000;left:442px;">Disk #</div>
<div class="t" style="top:126.69px;font-size:11px;line-height:14px;letter-spacing:-0.329px;color:#000;left:496px;">Category</div>
<div class="t" style="top:126.69px;font-size:11px;line-height:14px;letter-spacing:-0.199px;color:#000;left:554px;">Location</div>
<div class="t" style="top:126.69px;font-size:11px;line-height:14px;letter-spacing:-0.526px;color:#000;left:623px;">Comment</div>
<div class="t" style="top:126.69px;font-size:11px;line-height:14px;letter-spacing:-0.497px;color:#000;right:372.50px;">Folders</div>
<div class="t" style="top:126.69px;font-size:11px;line-height:14px;letter-spacing:-0.585px;color:#000;right:319.58px;">Files</div>
<div class="t" style="top:126.69px;font-size:11px;line-height:14px;letter-spacing:-0.317px;color:#000;right:230.32px;">Data size</div>
<div class="t" style="top:126.69px;font-size:11px;line-height:14px;letter-spacing:-0.363px;color:#000;right:130.66px;">Free space</div>
<div class="t" style="top:126.69px;font-size:11px;line-height:14px;letter-spacing:-0.225px;color:#000;right:30.23px;">Capacity</div>
<div class="t" style="top:126.69px;font-size:11px;line-height:14px;letter-spacing:-0.3px;color:#000;left:1090px;">D</div>
<div class="a" style="left:221.89999999999998px;top:142.7px;width:15.6px;height:15.6px;border-radius:50%;background:conic-gradient(from 0deg,#9cc8a0 0deg,#6f9f86 35deg,#7aa88c 70deg,#cfeac4 100deg,#8fbf96 140deg,#6d9c84 170deg,#86b690 200deg,#d2edc8 235deg,#a6d2a4 265deg,#cdeac2 300deg,#c2e4ba 330deg,#9cc8a0 360deg);"></div>
<div class="a" style="left:227.1px;top:147.9px;width:5.2px;height:5.2px;border-radius:50%;background:#fff;border:0.5px solid #86ad7c;"></div>
<svg class="a" style="left:221.3px;top:160px" width="16" height="16" viewBox="0 0 16 16"><path d="M1.5 3.5q0-1 1-1h3.5l1.5 1.5h6v9h-12z" fill="url(#gFoldB)" stroke="#3a8ad8" stroke-width=".9"/><path d="M2.5 6.5h12q.8 0 .8.8v6q0 .8-.8.8h-11.2q-.8 0-.8-.8z" fill="url(#gFold)" stroke="#3a8ad8" stroke-width=".7"/></svg>
<div class="t" style="top:143.69px;font-size:11px;line-height:14px;letter-spacing:-0.105px;color:#000;left:239.6px;">Queen / Greatest Hits I (Pl...</div>
<div class="t" style="top:160.69px;font-size:11px;line-height:14px;letter-spacing:-0.276px;color:#000;left:240px;">Softpedia</div>
<div class="t" style="top:143.69px;font-size:11px;line-height:14px;letter-spacing:-0.3px;color:#000;right:674.30px;">1</div>
<div class="t" style="top:143.69px;font-size:11px;line-height:14px;letter-spacing:-0.335px;color:#000;left:492px;">Others</div>
<div class="t" style="top:143.69px;font-size:11px;line-height:14px;letter-spacing:-0.335px;color:#000;left:550px;">Others</div>
<div class="t" style="top:143.69px;font-size:11px;line-height:14px;letter-spacing:-0.3px;color:#000;right:368.30px;">0</div>
<div class="t" style="top:143.69px;font-size:11px;line-height:14px;letter-spacing:-0.3px;color:#000;right:315.30px;">17</div>
<div class="t" style="top:143.69px;font-size:11px;line-height:14px;letter-spacing:-0.3px;color:#000;right:226.80px;">0 KB</div>
<div class="t" style="top:143.69px;font-size:11px;line-height:14px;letter-spacing:-0.3px;color:#000;right:126.80px;">0 KB</div>
<div class="t" style="top:143.69px;font-size:11px;line-height:14px;letter-spacing:-0.3px;color:#000;right:27.30px;">0 KB</div>
<div class="t" style="top:143.69px;font-size:11px;line-height:14px;letter-spacing:-0.3px;color:#000;left:1087px;">E:</div>
<div class="t" style="top:160.69px;font-size:11px;line-height:14px;letter-spacing:-0.3px;color:#000;right:674.30px;">2</div>
<div class="t" style="top:160.69px;font-size:11px;line-height:14px;letter-spacing:-0.335px;color:#000;left:492px;">Others</div>
<div class="t" style="top:160.69px;font-size:11px;line-height:14px;letter-spacing:-0.335px;color:#000;left:550px;">Others</div>
<div class="t" style="top:160.69px;font-size:11px;line-height:14px;letter-spacing:-0.3px;color:#000;right:368.30px;">12</div>
<div class="t" style="top:160.69px;font-size:11px;line-height:14px;letter-spacing:-0.3px;color:#000;right:315.30px;">2,646</div>
<div class="t" style="top:160.69px;font-size:11px;line-height:14px;letter-spacing:-0.3px;color:#000;right:226.80px;">1,941,976 KB</div>
<div class="t" style="top:160.69px;font-size:11px;line-height:14px;letter-spacing:-0.3px;color:#000;right:126.80px;">279,977,060 KB</div>
<div class="t" style="top:160.69px;font-size:11px;line-height:14px;letter-spacing:-0.3px;color:#000;right:27.30px;">283,582,460 KB</div>
<div class="t" style="top:160.69px;font-size:11px;line-height:14px;letter-spacing:-0.3px;color:#000;left:1087px;">D:</div>
<div class="a " style="left:220px;top:422px;width:878px;height:16px;background:#ececec;"></div>
<div class="a " style="left:238px;top:422px;width:630px;height:15px;background:#cfcfcf;"></div>
<svg class="a" style="left:225px;top:426px" width="8" height="8" viewBox="0 0 8 8"><path d="M6.2 .8L2.6 4L6.2 7.2" stroke="#000" stroke-width="2.1" fill="none"/></svg>
<svg class="a" style="left:1085px;top:426px" width="8" height="8" viewBox="0 0 8 8"><path d="M1.8 .8L5.4 4L1.8 7.2" stroke="#000" stroke-width="2.1" fill="none"/></svg>
<div class="a box" style="left:218px;top:469px;width:307px;height:314px;"></div>
<svg class="a" style="left:224px;top:475px" width="9" height="9" viewBox="0 0 9 9"><rect x=".5" y=".5" width="8" height="8" fill="#fff" stroke="#919191"/><path d="M2 4.5h5" stroke="#000"/></svg>
<div class="a " style="left:233px;top:479px;width:6px;height:1px;background-image:repeating-linear-gradient(to right,#a0a0a0 0,#a0a0a0 1px,transparent 1px,transparent 2px);"></div>
<svg class="a" style="left:238px;top:472px" width="18" height="15" viewBox="0 0 18 15"><path d="M1 3q0-2 2-2h3.5q1 0 1.5 1l.5 1h5q1.5 0 1.5 1.5v2.5h-14z" fill="#dcecfb" stroke="#3a8ad8" stroke-width=".9"/><path d="M3.6 6.2h12.6q1.3 0 .9 1.3l-1.6 5q-.5 1.5-2 1.5h-10.5q-1.6 0-1.6-1.6z" fill="url(#gFold)" stroke="#2f7fd0" stroke-width=".8"/></svg>
<div class="a " style="left:257px;top:471px;width:60px;height:17px;background:#f1f1f1;"></div>
<div class="t" style="top:472.19px;font-size:11px;line-height:14px;letter-spacing:-0.276px;color:#000;left:260px;">Softpedia</div>
<div class="a " style="left:247px;top:487px;width:1px;height:20px;background-image:repeating-linear-gradient(to bottom,#a0a0a0 0,#a0a0a0 1px,transparent 1px,transparent 2px);"></div>
<div class="a " style="left:248px;top:495px;width:10px;height:1px;background-image:repeating-linear-gradient(to right,#a0a0a0 0,#a0a0a0 1px,transparent 1px,transparent 2px);"></div>
<div class="a " style="left:253px;top:511px;width:5px;height:1px;background-image:repeating-linear-gradient(to right,#a0a0a0 0,#a0a0a0 1px,transparent 1px,transparent 2px);"></div>
<svg class="a" style="left:258px;top:489px" width="16" height="14" viewBox="0 0 16 14"><path d="M.7 2.4q0-1.6 1.6-1.6h3.3q.9 0 1.4.8l.8 1.2h5.6q1.5 0 1.5 1.5v7.4q0 1.6-1.6 1.6h-11q-1.6 0-1.6-1.6z" fill="#f7dc8c" stroke="#d9a550" stroke-width=".9"/><path d="M2.5 4.6h10.8q1.4 0 1.4 1.4v5.6q0 1.5-1.5 1.5h-10.6q-1.5 0-1.5-1.5v-5.6q0-1.4 1.4-1.4z" fill="url(#gFoldY)" stroke="#d6a656" stroke-width=".7"/><path d="M2.6 5.4h6L2.4 9.6z" fill="#fff" opacity=".85"/></svg>
<svg class="a" style="left:243px;top:507px" width="9" height="9" viewBox="0 0 9 9"><rect x=".5" y=".5" width="8" height="8" fill="#fff" stroke="#919191"/><path d="M2 4.5h5" stroke="#000"/><path d="M4.5 2v5" stroke="#000"/></svg>
<svg class="a" style="left:258px;top:505px" width="16" height="14" viewBox="0 0 16 14"><path d="M.7 2.4q0-1.6 1.6-1.6h3.3q.9 0 1.4.8l.8 1.2h5.6q1.5 0 1.5 1.5v7.4q0 1.6-1.6 1.6h-11q-1.6 0-1.6-1.6z" fill="#f7dc8c" stroke="#d9a550" stroke-width=".9"/><path d="M2.5 4.6h10.8q1.4 0 1.4 1.4v5.6q0 1.5-1.5 1.5h-10.6q-1.5 0-1.5-1.5v-5.6q0-1.4 1.4-1.4z" fill="url(#gFoldY)" stroke="#d6a656" stroke-width=".7"/><path d="M2.6 5.4h6L2.4 9.6z" fill="#fff" opacity=".85"/></svg>
<div class="t" style="top:488.19px;font-size:11px;line-height:14px;letter-spacing:-0.276px;color:#000;left:280px;">Softpedia</div>
<div class="t" style="top:504.19px;font-size:11px;line-height:14px;letter-spacing:-0.267px;color:#000;left:280px;">Testing files</div>
<div class="a box" style="left:529px;top:469px;width:571px;height:314px;"></div>
<div class="a " style="left:530px;top:470px;width:568px;height:18px;background:#fcfcfc;"></div>
<div class="a " style="left:531px;top:488px;width:30px;height:68px;background:#f5f5f5;"></div>
<div class="a " style="left:755px;top:471px;width:1px;height:15px;background:#dfe8f5;"></div>
<div class="a " style="left:826px;top:471px;width:1px;height:15px;background:#dfe8f5;"></div>
<div class="a " style="left:995px;top:471px;width:1px;height:15px;background:#dfe8f5;"></div>
<div class="t" style="top:473.19px;font-size:11px;line-height:14px;letter-spacing:-0.586px;color:#000;left:539px;">Name</div>
<div class="t" style="top:473.19px;font-size:11px;line-height:14px;letter-spacing:-0.322px;color:#000;left:1004px;">Modified</div>
<div class="t" style="top:473.19px;font-size:11px;line-height:14px;letter-spacing:-0.3px;color:#000;right:281.30px;">Size</div>
<div class="t" style="top:473.19px;font-size:11px;line-height:14px;letter-spacing:-0.3px;color:#000;left:834px;">Type</div>
<svg class="a" style="left:563px;top:490px" width="16" height="14" viewBox="0 0 16 14"><path d="M.7 2.4q0-1.6 1.6-1.6h3.3q.9 0 1.4.8l.8 1.2h5.6q1.5 0 1.5 1.5v7.4q0 1.6-1.6 1.6h-11q-1.6 0-1.6-1.6z" fill="#f7dc8c" stroke="#d9a550" stroke-width=".9"/><path d="M2.5 4.6h10.8q1.4 0 1.4 1.4v5.6q0 1.5-1.5 1.5h-10.6q-1.5 0-1.5-1.5v-5.6q0-1.4 1.4-1.4z" fill="url(#gFoldY)" stroke="#d6a656" stroke-width=".7"/><path d="M2.6 5.4h6L2.4 9.6z" fill="#fff" opacity=".85"/></svg>
<div class="t" style="top:490.19px;font-size:11px;line-height:14px;letter-spacing:-0.276px;color:#000;left:581px;">Softpedia</div>
<div class="t" style="top:490.19px;font-size:11px;line-height:14px;letter-spacing:-0.3px;color:#000;right:279.30px;">988,435 KB</div>
<div class="t" style="top:490.19px;font-size:11px;line-height:14px;letter-spacing:-0.415px;color:#000;left:834px;">File Folder</div>
<div class="t" style="top:490.19px;font-size:11px;line-height:14px;letter-spacing:-0.26px;color:#000;left:1001px;">27-Apr-16 14:15</div>
<svg class="a" style="left:563px;top:507px" width="16" height="14" viewBox="0 0 16 14"><path d="M.7 2.4q0-1.6 1.6-1.6h3.3q.9 0 1.4.8l.8 1.2h5.6q1.5 0 1.5 1.5v7.4q0 1.6-1.6 1.6h-11q-1.6 0-1.6-1.6z" fill="#f7dc8c" stroke="#d9a550" stroke-width=".9"/><path d="M2.5 4.6h10.8q1.4 0 1.4 1.4v5.6q0 1.5-1.5 1.5h-10.6q-1.5 0-1.5-1.5v-5.6q0-1.4 1.4-1.4z" fill="url(#gFoldY)" stroke="#d6a656" stroke-width=".7"/><path d="M2.6 5.4h6L2.4 9.6z" fill="#fff" opacity=".85"/></svg>
<div class="t" style="top:507.19px;font-size:11px;line-height:14px;letter-spacing:-0.205px;color:#000;left:581px;">Testing files</div>
<div class="t" style="top:507.19px;font-size:11px;line-height:14px;letter-spacing:-0.3px;color:#000;right:279.30px;">953,541 KB</div>
<div class="t" style="top:507.19px;font-size:11px;line-height:14px;letter-spacing:-0.415px;color:#000;left:834px;">File Folder</div>
<div class="t" style="top:507.19px;font-size:11px;line-height:14px;letter-spacing:-0.264px;color:#000;left:1001px;">05-May-16 10:29</div>
<svg class="a" style="left:563px;top:522px" width="16" height="16" viewBox="0 0 16 16"><path d="M2.5 .5h8l3 3v11.6h-11z" fill="#fdfdfe" stroke="#8e8e8e" stroke-width="1"/><path d="M10.5 .5v3h3" fill="#f0f0f0" stroke="#8e8e8e" stroke-width=".9"/></svg>
<div class="t" style="top:524.19px;font-size:11px;line-height:14px;letter-spacing:-0.32px;color:#000;left:581px;">._.DS_Store</div>
<div class="t" style="top:524.19px;font-size:11px;line-height:14px;letter-spacing:-0.3px;color:#000;right:279.30px;">4 KB</div>
<div class="t" style="top:524.19px;font-size:11px;line-height:14px;letter-spacing:-0.313px;color:#000;left:834px;">DS_STORE File</div>
<div class="t" style="top:524.19px;font-size:11px;line-height:14px;letter-spacing:-0.184px;color:#000;left:1001px;">06-Sep-14 14:38</div>
<svg class="a" style="left:563px;top:539px" width="16" height="16" viewBox="0 0 16 16"><path d="M2.5 .5h8l3 3v11.6h-11z" fill="#fdfdfe" stroke="#8e8e8e" stroke-width="1"/><path d="M10.5 .5v3h3" fill="#f0f0f0" stroke="#8e8e8e" stroke-width=".9"/></svg>
<div class="t" style="top:541.19px;font-size:11px;line-height:14px;letter-spacing:-0.372px;color:#000;left:581px;">.DS_Store</div>
<div class="t" style="top:541.19px;font-size:11px;line-height:14px;letter-spacing:-0.3px;color:#000;right:279.30px;">187 KB</div>
<div class="t" style="top:541.19px;font-size:11px;line-height:14px;letter-spacing:-0.313px;color:#000;left:834px;">DS_STORE File</div>
<div class="t" style="top:541.19px;font-size:11px;line-height:14px;letter-spacing:-0.183px;color:#000;left:1001px;">18-Dec-15 10:50</div>
<div class="a " style="left:531px;top:765px;width:567px;height:16px;background:#ececec;"></div>
<div class="a " style="left:549px;top:765px;width:361px;height:15px;background:#cfcfcf;"></div>
<svg class="a" style="left:536px;top:769px" width="8" height="8" viewBox="0 0 8 8"><path d="M6.2 .8L2.6 4L6.2 7.2" stroke="#000" stroke-width="2.1" fill="none"/></svg>
<svg class="a" style="left:1085px;top:769px" width="8" height="8" viewBox="0 0 8 8"><path d="M1.8 .8L5.4 4L1.8 7.2" stroke="#000" stroke-width="2.1" fill="none"/></svg>
<div class="a " style="left:725px;top:769px;width:2px;height:7px;background:#585858;"></div>
<div class="a " style="left:728px;top:769px;width:2px;height:7px;background:#585858;"></div>
<div class="a " style="left:731px;top:769px;width:2px;height:7px;background:#585858;"></div>
<div class="a " style="left:1px;top:785px;width:267px;height:1px;background:#a3a3a3;"></div>
<div class="a " style="left:1px;top:785px;width:1px;height:17px;background:#a3a3a3;"></div>
<div class="a " style="left:268px;top:785px;width:1px;height:18px;background:#fdfdfd;"></div>
<div class="a " style="left:271px;top:785px;width:809px;height:1px;background:#a3a3a3;"></div>
<div class="a " style="left:271px;top:785px;width:1px;height:17px;background:#a3a3a3;"></div>
<div class="a " style="left:1080px;top:785px;width:1px;height:18px;background:#fdfdfd;"></div>
<div class="t" style="top:786.79px;font-size:11px;line-height:14px;letter-spacing:-0.225px;color:#000;left:5px;">4 objects</div>
<div class="t" style="top:786.79px;font-size:11px;line-height:14px;letter-spacing:-0.166px;color:#000;left:275.4px;">Total size: 1.85 GB (1,988,583,406 bytes)</div>
<svg class="a" style="left:1087px;top:788px" width="12" height="12" viewBox="0 0 12 12"><g fill="#8c96b4"><rect x="10" y="1.5" width="1.2" height="1.2"/><rect x="7" y="4.5" width="1.2" height="1.2"/><rect x="10" y="4.5" width="1.2" height="1.2"/><rect x="4" y="7.5" width="1.2" height="1.2"/><rect x="7" y="7.5" width="1.2" height="1.2"/><rect x="10" y="7.5" width="1.2" height="1.2"/><rect x="1" y="10.5" width="1.2" height="1.2"/><rect x="4" y="10.5" width="1.2" height="1.2"/><rect x="7" y="10.5" width="1.2" height="1.2"/><rect x="10" y="10.5" width="1.2" height="1.2"/></g></svg>
<div class="a " style="left:0px;top:0px;width:1101px;height:1px;background:#aaa;"></div>
<div class="a " style="left:0px;top:0px;width:1px;height:804px;background:#aaa;"></div>
<div class="a " style="left:1100px;top:0px;width:1px;height:804px;background:#aaa;"></div>
<div class="a " style="left:0px;top:802px;width:1101px;height:1px;background:#fdfdfd;"></div>
<div class="a " style="left:0px;top:803px;width:1101px;height:1px;background:#1c2b4d;"></div>
<div class="a " style="left:0px;top:802px;width:1px;height:1px;background:#1c2b4d;"></div>
<div class="a " style="left:265px;top:264px;width:603px;height:243px;background:#f3f3f3;border:1px solid #188a7b;box-shadow:0 5px 13px 0 rgba(0,0,0,.33),0 0 3px rgba(0,0,0,.12);"></div>
<div class="a " style="left:266px;top:265px;width:601px;height:25px;background:#fff;"></div>
<div class="t" style="top:268.84px;font-size:12px;line-height:16px;letter-spacing:-0.251px;color:#000;left:269px;">Statistics</div>
<div class="a box" style="left:274px;top:298px;width:585px;height:169px;"></div>
<div class="a " style="left:275px;top:299px;width:583px;height:18px;background:#fcfcfc;"></div>
<div class="a " style="left:275px;top:317px;width:583px;height:1px;background:#f1f1f1;"></div>
<div class="a " style="left:275px;top:334px;width:583px;height:1px;background:#f1f1f1;"></div>
<div class="a " style="left:275px;top:351px;width:583px;height:1px;background:#f1f1f1;"></div>
<div class="a " style="left:275px;top:368px;width:583px;height:1px;background:#f1f1f1;"></div>
<div class="a " style="left:275px;top:385px;width:583px;height:1px;background:#f1f1f1;"></div>
<div class="a " style="left:275px;top:402px;width:583px;height:1px;background:#f1f1f1;"></div>
<div class="a " style="left:275px;top:419px;width:583px;height:1px;background:#f1f1f1;"></div>
<div class="a " style="left:275px;top:436px;width:583px;height:1px;background:#f1f1f1;"></div>
<div class="a " style="left:275px;top:453px;width:583px;height:1px;background:#f1f1f1;"></div>
<div class="a " style="left:409px;top:317px;width:1px;height:148px;background:#f1f1f1;"></div>
<div class="a " style="left:408px;top:300px;width:1px;height:15px;background:#dfe8f5;"></div>
<div class="a " style="left:509px;top:317px;width:1px;height:148px;background:#f1f1f1;"></div>
<div class="a " style="left:508px;top:300px;width:1px;height:15px;background:#dfe8f5;"></div>
<div class="a " style="left:609px;top:317px;width:1px;height:148px;background:#f1f1f1;"></div>
<div class="a " style="left:608px;top:300px;width:1px;height:15px;background:#dfe8f5;"></div>
<div class="a " style="left:709px;top:317px;width:1px;height:148px;background:#f1f1f1;"></div>
<div class="a " style="left:708px;top:300px;width:1px;height:15px;background:#dfe8f5;"></div>
<div class="a " style="left:842px;top:317px;width:1px;height:148px;background:#f1f1f1;"></div>
<div class="a " style="left:841px;top:300px;width:1px;height:15px;background:#dfe8f5;"></div>
<div class="t" style="top:302.19px;font-size:11px;line-height:14px;letter-spacing:-0.304px;color:#000;left:285.5px;">Disk type</div>
<div class="t" style="top:302.19px;font-size:11px;line-height:14px;letter-spacing:-0.346px;color:#000;right:602.35px;">Quantity</div>
<div class="t" style="top:302.19px;font-size:11px;line-height:14px;letter-spacing:-0.497px;color:#000;right:502.50px;">Folders</div>
<div class="t" style="top:302.19px;font-size:11px;line-height:14px;letter-spacing:-0.585px;color:#000;right:402.58px;">Files</div>
<div class="t" style="top:302.19px;font-size:11px;line-height:14px;letter-spacing:-0.317px;color:#000;right:269.32px;">Data size</div>
<div class="a" style="left:278.0px;top:317.7px;width:15.6px;height:15.6px;border-radius:50%;background:conic-gradient(from 0deg,#9cc8a0 0deg,#6f9f86 35deg,#7aa88c 70deg,#cfeac4 100deg,#8fbf96 140deg,#6d9c84 170deg,#86b690 200deg,#d2edc8 235deg,#a6d2a4 265deg,#cdeac2 300deg,#c2e4ba 330deg,#9cc8a0 360deg);"></div>
<div class="a" style="left:283.2px;top:322.9px;width:5.2px;height:5.2px;border-radius:50%;background:#fff;border:0.5px solid #86ad7c;"></div>
<svg class="a" style="left:278px;top:335px" width="16" height="16" viewBox="0 0 16 16"><path d="M1.5 3.5q0-1 1-1h3.5l1.5 1.5h6v9h-12z" fill="url(#gFoldB)" stroke="#3a8ad8" stroke-width=".9"/><path d="M2.5 6.5h12q.8 0 .8.8v6q0 .8-.8.8h-11.2q-.8 0-.8-.8z" fill="url(#gFold)" stroke="#3a8ad8" stroke-width=".7"/></svg>
<div class="t" style="top:319.19px;font-size:11px;line-height:14px;letter-spacing:-0.146px;color:#000;left:296px;">CDs/DVDs</div>
<div class="t" style="top:336.19px;font-size:11px;line-height:14px;letter-spacing:-0.526px;color:#000;left:296px;">Folders</div>
<div class="t" style="top:353.19px;font-size:11px;line-height:14px;letter-spacing:0.396px;color:#000;font-weight:bold;left:297.5px;">Total:</div>
<div class="t" style="top:319.19px;font-size:11px;line-height:14px;letter-spacing:-0.3px;color:#000;right:599.30px;">1</div>
<div class="t" style="top:319.19px;font-size:11px;line-height:14px;letter-spacing:-0.3px;color:#000;right:499.30px;">0</div>
<div class="t" style="top:319.19px;font-size:11px;line-height:14px;letter-spacing:-0.3px;color:#000;right:399.30px;">17</div>
<div class="t" style="top:319.19px;font-size:11px;line-height:14px;letter-spacing:-0.3px;color:#000;right:266.30px;">0 KB</div>
<div class="t" style="top:336.19px;font-size:11px;line-height:14px;letter-spacing:-0.3px;color:#000;right:599.30px;">1</div>
<div class="t" style="top:336.19px;font-size:11px;line-height:14px;letter-spacing:-0.3px;color:#000;right:499.30px;">12</div>
<div class="t" style="top:336.19px;font-size:11px;line-height:14px;letter-spacing:-0.3px;color:#000;right:399.30px;">2,646</div>
<div class="t" style="top:336.19px;font-size:11px;line-height:14px;letter-spacing:-0.3px;color:#000;right:266.30px;">1,941,976 KB</div>
<div class="t" style="top:353.19px;font-size:11px;line-height:14px;letter-spacing:0.382px;color:#000;font-weight:bold;right:597.62px;">2</div>
<div class="t" style="top:353.19px;font-size:11px;line-height:14px;letter-spacing:0.382px;color:#000;font-weight:bold;right:497.62px;">12</div>
<div class="t" style="top:353.19px;font-size:11px;line-height:14px;letter-spacing:0.755px;color:#000;font-weight:bold;right:397.25px;">2,663</div>
<div class="t" style="top:353.19px;font-size:11px;line-height:14px;letter-spacing:0.593px;color:#000;font-weight:bold;right:264.41px;">1,941,976 KB</div>
<div class="a " style="left:779px;top:475px;width:79px;height:23px;background:#e1e1e1;border:1px solid #adadad;"></div>
<div class="t" style="top:478.84px;font-size:12px;line-height:16px;letter-spacing:-0.669px;color:#000;left:810px;">OK</div>
<div class="a" style="left:266px;top:467px;width:601px;height:39px;overflow:hidden">
<div class="t" style="top:-13.57px;font-size:30.5px;line-height:40px;letter-spacing:-0.949px;color:rgba(255,255,255,.6);font-weight:bold;left:409px;text-shadow:0 1px 1px rgba(0,0,0,.06);">SOFTPEDIA</div>
</div>
</body></html>
